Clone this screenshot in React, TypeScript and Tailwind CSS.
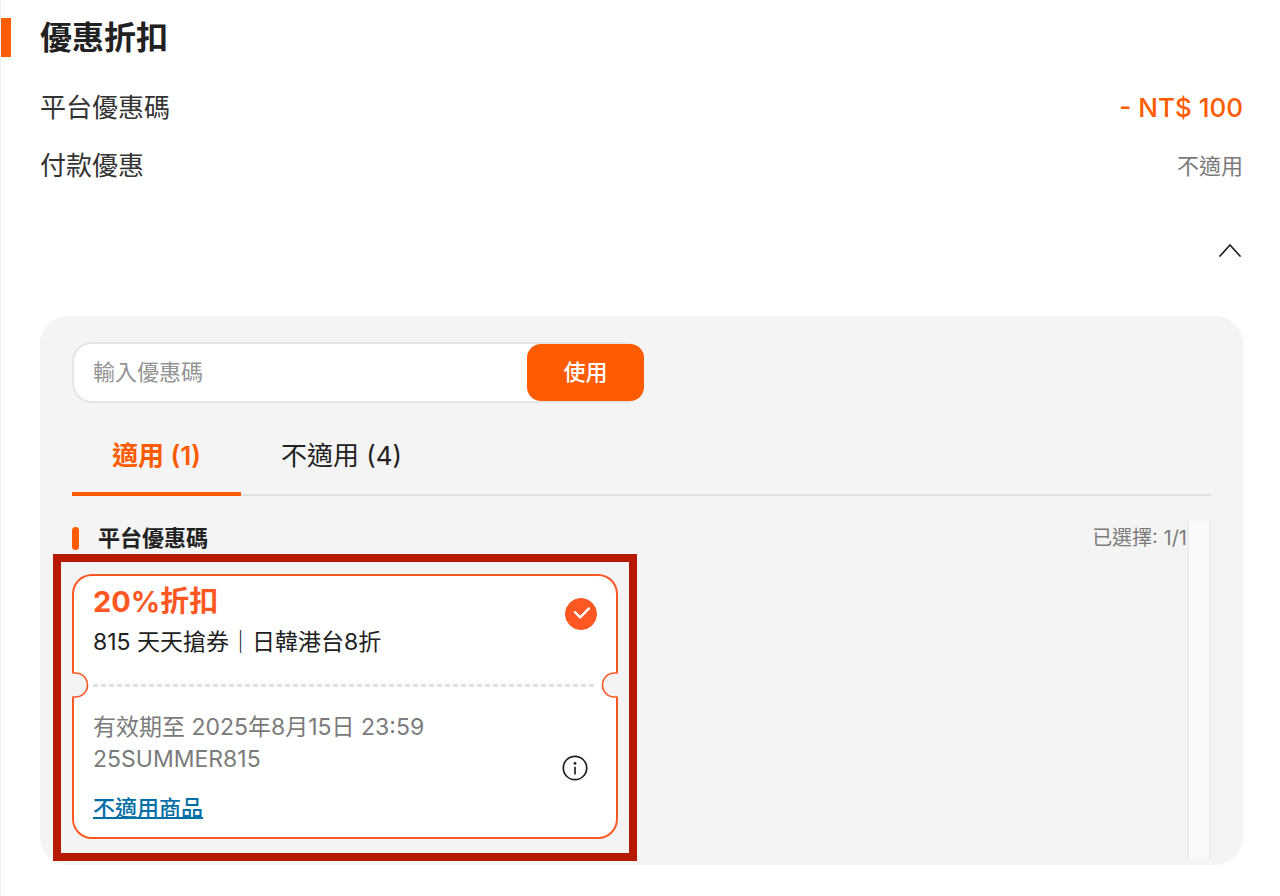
import { useState } from 'react'

type IconProps = { className?: string }

const iconBase = {
  fill: 'none',
  stroke: 'currentColor',
  strokeLinecap: 'round' as const,
  strokeLinejoin: 'round' as const,
}

function ChevronUpIcon({ className }: IconProps) {
  return (
    <svg className={className} viewBox="0 0 26 26" {...iconBase} strokeWidth={1.7}>
      <path d="M3 19L13 8l10 11" />
    </svg>
  )
}

function CheckIcon({ className }: IconProps) {
  return (
    <svg className={className} viewBox="0 0 32 32" {...iconBase} strokeWidth={2.4}>
      <path d="M10 14.2l5.2 5.2 8.8-9" />
    </svg>
  )
}

function InfoIcon({ className }: IconProps) {
  return (
    <svg className={className} viewBox="0 0 26 26" {...iconBase} strokeWidth={1.7}>
      <circle cx="13" cy="13" r="11.7" />
      <line x1="13" y1="12.4" x2="13" y2="18.8" />
      <circle cx="13" cy="8.4" r="1.4" fill="currentColor" stroke="none" />
    </svg>
  )
}

// Half-round cut in the ticket edge; mirrored for the right side
function Notch({ className }: IconProps) {
  return (
    <svg className={className} viewBox="0 0 17 26" fill="none">
      <path d="M0 0h17v26H0z" fill="#fff" />
      <path d="M0 0h1v1h3a12 12 0 010 24H1v1H0z" fill="#f4f4f4" />
      <path d="M1 0v1h2.5a12 12 0 010 24H1v1" stroke="#ff5722" strokeWidth={1.6} />
    </svg>
  )
}

function Coupon() {
  const [selected, setSelected] = useState(true)

  return (
    <article className="relative">
      <div className="h-[98px] rounded-t-[20px] border-x-2 border-t-2 border-[#ff5722] bg-white pl-[19px] pr-[19px] flex items-start justify-between">
        <div className="pt-2">
          <h4 className="text-[29px] leading-9 font-bold text-[#ff5722]">20%折扣</h4>
          <p className="mt-[6px] text-[23px] leading-8">815 天天搶券｜日韓港台8折</p>
        </div>
        <label className="mt-[22px] grid w-8 h-8 cursor-pointer flex-shrink-0">
          <input
            type="checkbox"
            checked={selected}
            onChange={e => setSelected(e.target.checked)}
            aria-label="選擇優惠碼"
            className="peer appearance-none col-start-1 row-start-1 w-8 h-8 rounded-full border border-[#ff5722] checked:bg-[#ff5722]"
          />
          <CheckIcon className="col-start-1 row-start-1 w-8 h-8 text-white pointer-events-none" />
        </label>
      </div>

      <div className="flex h-[26px] items-center bg-white">
        <Notch className="w-[17px] h-[26px] flex-shrink-0" />
        <div className="mx-1 h-[3px] flex-1 bg-[repeating-linear-gradient(to_right,#e0e0e0_0_5px,transparent_5px_8px)]" />
        <Notch className="w-[17px] h-[26px] flex-shrink-0 -scale-x-100" />
      </div>

      <div className="h-[141px] rounded-b-[20px] border-x-2 border-b-2 border-[#ff5722] bg-white pl-[19px] pr-7 flex items-center justify-between">
        <div className="h-full pt-[13px] leading-8">
          <p className="text-[23px] text-[#7b7b7b]">有效期至 2025年8月15日 23:59</p>
          <p className="text-[23px] text-[#7b7b7b]">25SUMMER815</p>
          <a href="#excluded" className="mt-[17px] block w-fit text-[22px] font-medium text-[#006ea6] underline decoration-2">
            不適用商品
          </a>
        </div>
        <button type="button" aria-label="優惠碼說明" className="flex-shrink-0 cursor-pointer">
          <InfoIcon className="w-[26px] h-[26px]" />
        </button>
      </div>

      {/* Highlight frame around the applied coupon */}
      <div className="pointer-events-none absolute -inset-x-[19px] -top-5 -bottom-[22px] border-8 border-[#b51a00]" />
    </article>
  )
}

const tabs = [
  { id: 'usable', label: '適用 (1)' },
  { id: 'unusable', label: '不適用 (4)' },
]

export default function App() {
  const [tab, setTab] = useState('usable')
  const [code, setCode] = useState('')

  return (
    <main className="min-h-screen border-l border-[#f2f2f2] bg-white pt-[18px] pb-[31px] font-[Inter,'Noto_Sans_CJK_TC',sans-serif] text-[#212121]">
      <header className="flex h-[39px] items-center">
        <span className="h-full w-[10px] bg-[#ff5b00]" />
        <h2 className="ml-[29px] text-[32px] leading-10 font-semibold">優惠折扣</h2>
      </header>

      <div className="pl-[39px] pr-[37px]">
        <dl className="mt-[31px] text-[26px] leading-10">
          <div className="flex items-center justify-between">
            <dt className="text-[#333]">平台優惠碼</dt>
            <dd className="font-medium text-[#ff5b00]">- NT$ 100</dd>
          </div>
          <div className="mt-[18px] flex items-center justify-between">
            <dt className="text-[#333]">付款優惠</dt>
            <dd className="text-[22px] text-[#7b7b7b]">不適用</dd>
          </div>
        </dl>

        <div className="mt-[51px] flex justify-end">
          <button type="button" aria-label="收合" className="cursor-pointer">
            <ChevronUpIcon className="w-[26px] h-[26px]" />
          </button>
        </div>

        <section className="mt-[53px] rounded-[28px] bg-[#f4f4f4] px-8 pt-[26px] pb-[6px]">
          <form
            onSubmit={e => e.preventDefault()}
            className="flex h-[61px] w-full max-w-[572px] rounded-[20px] border-y-2 border-l-2 border-[#e5e5e5] bg-white"
          >
            <input
              type="text"
              value={code}
              onChange={e => setCode(e.target.value)}
              placeholder="輸入優惠碼"
              aria-label="輸入優惠碼"
              className="min-w-0 flex-1 rounded-l-[20px] bg-transparent px-[19px] text-[22px] outline-none placeholder:text-[#949494]"
            />
            <button type="submit" className="w-[117px] rounded-[14px] bg-[#ff5b00] text-[22px] font-medium text-white cursor-pointer">
              使用
            </button>
          </form>

          <div role="tablist" className="mt-4 flex h-[77px] border-b-2 border-[#e0e0e0]">
            {tabs.map(item => (
              <button
                key={item.id}
                type="button"
                role="tab"
                aria-selected={tab === item.id}
                onClick={() => setTab(item.id)}
                className={`-mb-[2px] border-b-4 px-10 text-[26px] leading-10 cursor-pointer ${
                  tab === item.id
                    ? 'border-[#ff5b00] font-semibold text-[#ff5b00]'
                    : 'border-transparent'
                }`}
              >
                {item.label}
              </button>
            ))}
          </div>

          <div className="mt-[25px] flex h-[338px]">
            <div className="min-w-0 flex-1">
              <div className="flex h-[34px] items-center">
                <span className="h-[23px] w-[7px] rounded-full bg-[#ff5b00]" />
                <h3 className="ml-[19px] flex-1 text-[22px] leading-8 font-semibold">平台優惠碼</h3>
                <span className="text-[20px] leading-8 text-[#7b7b7b]">已選擇: 1/1</span>
              </div>
              <div className="mt-[19px] grid grid-cols-2 gap-x-[23px]">
                <Coupon />
              </div>
            </div>
            {/* Scroll track */}
            <div className="w-6 flex-shrink-0 border-x-2 border-[#ececec] bg-[#fafafa]" />
          </div>
        </section>
      </div>
    </main>
  )
}
